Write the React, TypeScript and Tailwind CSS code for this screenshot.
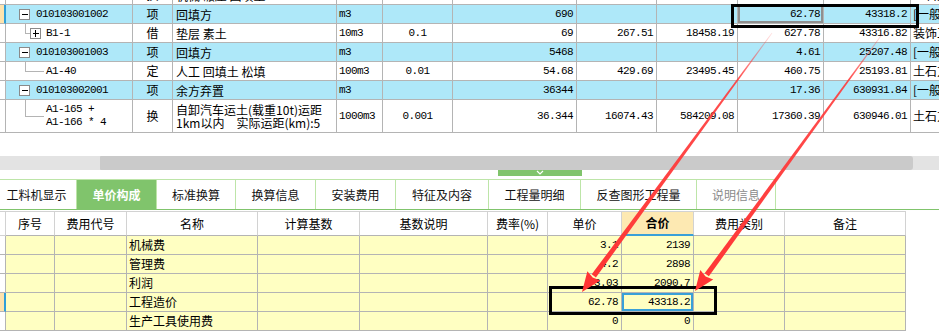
import type { ReactNode } from "react";

// 字体：数字用等宽，中文用思源黑体
const mono = "font-['Liberation_Mono','DejaVu_Sans_Mono',monospace] text-[11px] tracking-[-0.6px]";
const cjk = "font-['Noto_Sans_CJK_SC','Noto_Sans',sans-serif] text-[12px]";

type TreeKind = "parent" | "plus" | "leaf";

type TopRow = {
  kind: TreeKind;
  code: string[];
  type: string;
  name: string[];
  unit: string;
  coef: string;
  qty: string;
  price: string;
  total: string;
  unitCost: string;
  sum: string;
  fee: string;
  hl?: boolean;
  tall?: boolean;
  mark?: boolean;
  sel?: boolean;
};

const topRows: TopRow[] = [
  { kind: "parent", code: ["010103001002"], type: "项", name: ["回填方"], unit: "m3", coef: "", qty: "690", price: "", total: "", unitCost: "62.78", sum: "43318.2", fee: "[一般土建", hl: true, mark: true, sel: true },
  { kind: "plus", code: ["B1-1"], type: "借", name: ["垫层 素土"], unit: "10m3", coef: "0.1", qty: "69", price: "267.51", total: "18458.19", unitCost: "627.78", sum: "43316.82", fee: "装饰工程" },
  { kind: "parent", code: ["010103001003"], type: "项", name: ["回填方"], unit: "m3", coef: "", qty: "5468", price: "", total: "", unitCost: "4.61", sum: "25207.48", fee: "[一般土建", hl: true },
  { kind: "leaf", code: ["A1-40"], type: "定", name: ["人工 回填土 松填"], unit: "100m3", coef: "0.01", qty: "54.68", price: "429.69", total: "23495.45", unitCost: "460.75", sum: "25193.81", fee: "土石方工程" },
  { kind: "parent", code: ["010103002001"], type: "项", name: ["余方弃置"], unit: "m3", coef: "", qty: "36344", price: "", total: "", unitCost: "17.36", sum: "630931.84", fee: "[一般土建", hl: true },
  { kind: "leaf", code: ["A1-165 +", "A1-166 * 4"], type: "换", name: ["自卸汽车运土(载重10t)运距", "1km以内\u3000实际运距(km):5"], unit: "1000m3", coef: "0.001", qty: "36.344", price: "16074.43", total: "584209.08", unitCost: "17360.39", sum: "630946.01", fee: "土石方工程", tall: true },
];

const TreeMark = ({ kind, h }: { kind: TreeKind; h: number }) => {
  const m = Math.floor(h / 2) + 0.5;
  if (kind === "parent")
    return (
      <svg width="30" height={h} className="shrink-0" shapeRendering="crispEdges">
        <rect x="13.5" y={m - 5} width="10" height="10" fill="#fff" stroke="#8a8a8a" />
        <line x1="16" x2="22" y1={m} y2={m} stroke="#000" />
      </svg>
    );
  if (kind === "plus")
    return (
      <svg width="40" height={h} className="shrink-0" shapeRendering="crispEdges">
        <line x1="19.5" x2="19.5" y1="0" y2={m} stroke="#b4b4b4" />
        <line x1="19.5" x2="24" y1={m} y2={m} stroke="#b4b4b4" />
        <rect x="24.5" y={m - 5} width="10" height="10" fill="#fff" stroke="#8a8a8a" />
        <line x1="27" x2="33" y1={m} y2={m} stroke="#000" />
        <line x1="29.5" x2="29.5" y1={m - 3.5} y2={m + 3.5} stroke="#000" />
      </svg>
    );
  return (
    <svg width="40" height={h} className="shrink-0" shapeRendering="crispEdges">
      <line x1="19.5" x2="19.5" y1="0" y2={m} stroke="#b4b4b4" />
      <line x1="19.5" x2="38" y1={m} y2={m} stroke="#b4b4b4" />
    </svg>
  );
};

const Cell = ({ children, className = "" }: { children?: ReactNode; className?: string }) => (
  <div className={`flex items-center overflow-hidden whitespace-nowrap border-r border-b border-[#b4b4b4] ${className}`}>
    {children}
  </div>
);

const topCols = "grid grid-cols-[6px_127px_40px_164px_46px_70px_124px_80px_81px_86px_87px_80px] w-max";

const TopLine = ({ r }: { r: TopRow }) => {
  const h = r.tall ? 33 : 19;
  const bg = r.hl ? "bg-[#aee8f9]" : "bg-white";
  return (
    <div className={`${topCols} ${r.tall ? "h-[33px]" : "h-[19px]"}`}>
      <div className={`border-b border-[#b4b4b4] ${r.mark ? "bg-[#fde3ad] border-r-2 border-r-[#2f9fd8]" : "bg-white border-r"}`} />
      <Cell className={bg}>
        <TreeMark kind={r.kind} h={h - 1} />
        <div className={`${mono} leading-[13px]`}>
          {r.code.map((c) => (
            <div key={c} className="whitespace-pre">{c}</div>
          ))}
        </div>
      </Cell>
      <Cell className={`${bg} ${cjk} justify-center`}>{r.type}</Cell>
      <Cell className={`${bg} ${cjk} pl-[3px]`}>
        <div className="leading-[13px]">
          {r.name.map((n) => (
            <div key={n}>{n}</div>
          ))}
        </div>
      </Cell>
      <Cell className={`${bg} ${mono} pl-[2px]`}>{r.unit}</Cell>
      <Cell className={`${bg} ${mono} justify-center`}>{r.coef}</Cell>
      <Cell className={`${bg} ${mono} justify-end pr-[3px]`}>{r.qty}</Cell>
      <Cell className={`${bg} ${mono} justify-end pr-[3px]`}>{r.price}</Cell>
      <Cell className={`${bg} ${mono} justify-end pr-[3px]`}>{r.total}</Cell>
      <Cell className={`${bg} ${mono} justify-end pr-[3px] ${r.sel ? "shadow-[inset_0_0_0_2px_#8f8f8f]" : ""}`}>{r.unitCost}</Cell>
      <Cell className={`${bg} ${mono} justify-end pr-[3px]`}>{r.sum}</Cell>
      <Cell className={`${bg} ${cjk} pl-[2px]`}>{r.fee}</Cell>
    </div>
  );
};

const tabs = ["工料机显示", "单价构成", "标准换算", "换算信息", "安装费用", "特征及内容", "工程量明细", "反查图形工程量", "说明信息"];
const tabW = ["w-[80px] -ml-[3px]", "w-[80px]", "w-[79px]", "w-[80px]", "w-[80px]", "w-[93px]", "w-[92px]", "w-[116px]", "w-[79px]"];

const bottomCols = "grid grid-cols-[6px_49px_72px_131px_102px_128px_60px_74px_72px_91px_121px]";
const heads = ["序号", "费用代号", "名称", "计算基数", "基数说明", "费率(%)", "单价", "合价", "费用类别", "备注"];

const feeRows = [
  { name: "机械费", price: "3.1", sum: "2139" },
  { name: "管理费", price: "4.2", sum: "2898" },
  { name: "利润", price: "3.03", sum: "2090.7" },
  { name: "工程造价", price: "62.78", sum: "43318.2", mark: true },
  { name: "生产工具使用费", price: "0", sum: "0" },
];

// 红色标注箭头
const Arrow = ({ x1, y1, x2, y2, id }: { x1: number; y1: number; x2: number; y2: number; id: string }) => {
  const len = Math.hypot(x2 - x1, y2 - y1);
  const ux = (x2 - x1) / len;
  const uy = (y2 - y1) / len;
  const nx = -uy;
  const ny = ux;
  const bx = x2 - 20 * ux;
  const by = y2 - 20 * uy;
  const pts = (list: number[][]) => list.map((p) => p.join(",")).join(" ");
  return (
    <g>
      <defs>
        <linearGradient id={id} gradientUnits="userSpaceOnUse" x1={x1} y1={y1} x2={x2} y2={y2}>
          <stop offset="0" stopColor="#ff3b3b" stopOpacity="0.15" />
          <stop offset="0.18" stopColor="#ff3b3b" stopOpacity="0.9" />
          <stop offset="1" stopColor="#ff3434" stopOpacity="1" />
        </linearGradient>
      </defs>
      <polygon
        fill={`url(#${id})`}
        points={pts([
          [x1 + 0.4 * nx, y1 + 0.4 * ny],
          [bx + 2.6 * nx, by + 2.6 * ny],
          [bx - 2.6 * nx, by - 2.6 * ny],
          [x1 - 0.4 * nx, y1 - 0.4 * ny],
        ])}
      />
      <polygon
        fill="#ff3434"
        points={pts([
          [x2, y2],
          [bx + 8 * nx, by + 8 * ny],
          [bx + 2 * ux, by + 2 * uy],
          [bx - 8 * nx, by - 8 * ny],
        ])}
      />
    </g>
  );
};

const App = () => {
  return (
    <div className="relative w-[939px] h-[331px] overflow-hidden bg-white text-black">
      {/* 上部清单表格 */}
      <div className="h-[133px] overflow-hidden">
        <div className="-mt-[14px]">
          <TopLine
            r={{ kind: "leaf", code: ["A1-200"], type: "换", name: ["机械 碾压 回填土"], unit: "100m3", coef: "0.01", qty: "54.68", price: "3528.38", total: "43318.20", unitCost: "3528.38", sum: "43318.20", fee: "土石方工程" }}
          />
          {topRows.map((r, i) => (
            <TopLine key={i} r={r} />
          ))}
        </div>
      </div>

      {/* 横向滚动条 */}
      <div className="mt-[23px] flex h-[14px] bg-[#e3e3e3]">
        <div className="w-[100px]" />
        <div className="w-[813px] rounded-r-[3px] rounded-l-[1px] bg-[#cacaca]" />
      </div>

      <div className="flex h-[9px]">
        <div className="ml-[498px] flex h-[6px] w-[84px] justify-center bg-[#80c46c]">
          <svg width="8" height="6">
            <polyline points="1,1 4,4 7,1" fill="none" stroke="#fff" strokeWidth="1.2" />
          </svg>
        </div>
      </div>

      {/* 页签 */}
      <div className={`flex h-[31px] border-b border-[#80c46c] font-['Noto_Sans_CJK_SC','Noto_Sans',sans-serif] text-[12px]`}>
        {tabs.map((t, i) => (
          <div
            key={t}
            className={`${tabW[i]} flex items-center justify-center border-t border-r border-[#bde5a8] ${
              i === 1 ? "bg-[#80c46c] border-[#80c46c] font-bold text-white" : i === 8 ? "text-[#8a8a8a]" : "text-[#111]"
            }`}
          >
            {t}
          </div>
        ))}
      </div>

      {/* 单价构成 */}
      <div className="mt-[1px] w-[906px]">
        <div className={`${bottomCols} h-[25px] border-t border-[#d2d2d2] ${cjk}`}>
          <div className="border-r border-b border-[#d2d2d2]" />
          {heads.map((h) => (
            <div
              key={h}
              className={`flex items-center justify-center border-r border-[#d2d2d2] ${
                h === "合价" ? "bg-[#fde9b2] font-bold border-b-2 border-b-[#3aa0d8]" : "bg-white border-b border-b-[#b4b4b4]"
              }`}
            >
              {h}
            </div>
          ))}
        </div>
        {feeRows.map((r) => (
          <div key={r.name} className={`${bottomCols} h-[19px]`}>
            <div className={`border-b border-[#b4b4b4] ${r.mark ? "bg-[#fde3ad] border-r-2 border-r-[#2f9fd8]" : "bg-white border-r"}`} />
            <Cell className="bg-[#ffffc2]" />
            <Cell className="bg-[#ffffc2]" />
            <Cell className={`bg-[#ffffc2] ${cjk} pl-[2px]`}>{r.name}</Cell>
            <Cell className="bg-[#ffffc2]" />
            <Cell className="bg-[#ffffc2]" />
            <Cell className="bg-[#ffffc2]" />
            <Cell className={`bg-[#ffffc2] ${mono} justify-end pr-[3px]`}>{r.price}</Cell>
            <Cell className={`bg-[#ffffc2] ${mono} justify-end pr-[3px] ${r.mark ? "shadow-[inset_0_0_0_2px_#3aa0d8]" : ""}`}>{r.sum}</Cell>
            <Cell className="bg-[#ffffc2]" />
            <Cell className="bg-[#ffffc2]" />
          </div>
        ))}
      </div>

      {/* 标注框与箭头 */}
      <div className="absolute left-[731px] top-[4px] h-[24px] w-[188px] border-[3px] border-black" />
      <div className="absolute left-[549px] top-[286px] h-[29px] w-[168px] border-[3px] border-black" />
      <svg className="absolute left-0 top-0" width="939" height="331">
        <Arrow id="a1" x1={772} y1={33} x2={582} y2={292} />
        <Arrow id="a2" x1={883} y1={33} x2={695} y2={291} />
      </svg>
    </div>
  );
};

export default App;
